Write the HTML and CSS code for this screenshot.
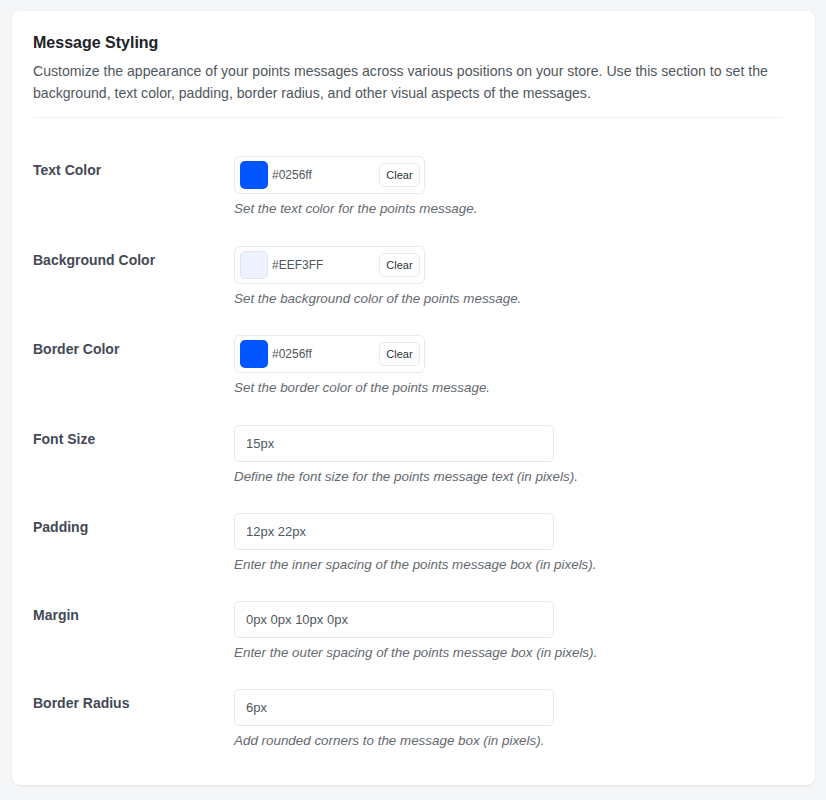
FILE: index.html
```html
<!DOCTYPE html>
<html lang="en">
<head>
    <meta charset="UTF-8">
    <meta name="viewport" content="width=device-width, initial-scale=1.0">
    <title>Message Styling</title>
    <link rel="stylesheet" href="styles.css">
</head>
<body>

    <div class="settings-card">
        <h2>Message Styling</h2>
        <p class="section-desc">Customize the appearance of your points messages across various positions on your store. Use this section to set the background, text color, padding, border radius, and other visual aspects of the messages.</p>
        <hr class="divider">

        <!-- Colores -->
        <div class="setting-row color-row">
            <label class="setting-label">Text Color</label>
            <div class="setting-field">
                <div class="color-picker">
                    <span class="swatch swatch-blue"></span>
                    <span class="hex">#0256ff</span>
                    <button type="button" class="clear-btn">Clear</button>
                </div>
                <p class="field-desc">Set the text color for the points message.</p>
            </div>
        </div>
        <div class="setting-row color-row">
            <label class="setting-label">Background Color</label>
            <div class="setting-field">
                <div class="color-picker">
                    <span class="swatch swatch-light"></span>
                    <span class="hex">#EEF3FF</span>
                    <button type="button" class="clear-btn">Clear</button>
                </div>
                <p class="field-desc">Set the background color of the points message.</p>
            </div>
        </div>
        <div class="setting-row color-row">
            <label class="setting-label">Border Color</label>
            <div class="setting-field">
                <div class="color-picker">
                    <span class="swatch swatch-blue"></span>
                    <span class="hex">#0256ff</span>
                    <button type="button" class="clear-btn">Clear</button>
                </div>
                <p class="field-desc">Set the border color of the points message.</p>
            </div>
        </div>

        <!-- Medidas -->
        <div class="setting-row">
            <label class="setting-label" for="font-size">Font Size</label>
            <div class="setting-field">
                <input type="text" id="font-size" value="15px">
                <p class="field-desc">Define the font size for the points message text (in pixels).</p>
            </div>
        </div>
        <div class="setting-row">
            <label class="setting-label" for="padding">Padding</label>
            <div class="setting-field">
                <input type="text" id="padding" value="12px 22px">
                <p class="field-desc">Enter the inner spacing of the points message box (in pixels).</p>
            </div>
        </div>
        <div class="setting-row">
            <label class="setting-label" for="margin">Margin</label>
            <div class="setting-field">
                <input type="text" id="margin" value="0px 0px 10px 0px">
                <p class="field-desc">Enter the outer spacing of the points message box (in pixels).</p>
            </div>
        </div>
        <div class="setting-row">
            <label class="setting-label" for="border-radius">Border Radius</label>
            <div class="setting-field">
                <input type="text" id="border-radius" value="6px">
                <p class="field-desc">Add rounded corners to the message box (in pixels).</p>
            </div>
        </div>
    </div>

</body>
</html>
```

FILE: styles.css
```css
body {
    font-family: "Liberation Sans", Arial, sans-serif;
    background-color: #f5f6f8;
    color: #3c434a;
    margin: 0;
    padding: 11px 11px 15px 12px;
}
.settings-card {
    background-color: #fff;
    border-radius: 8px;
    box-shadow: 0 1px 3px rgba(0, 0, 0, 0.08);
    padding: 22px 32px 22px 21px;
}
.settings-card h2 {
    font-size: 16px;
    font-weight: 700;
    line-height: 19px;
    color: #1d2327;
    margin: 0 0 8px;
}
.section-desc {
    font-size: 14.1px;
    line-height: 22px;
    color: #50575e;
    margin: 0;
}
.divider {
    border: none;
    border-top: 1px solid #eff0f2;
    margin: 13px 0 24px;
}
.setting-row {
    display: grid;
    grid-template-columns: 201px 1fr;
    padding: 14px 0 13px;
}
.color-row {
    padding-bottom: 13.6px;
}
.setting-label {
    font-size: 14px;
    font-weight: 700;
    line-height: 18px;
    color: #434955;
    padding-top: 5px;
}
.color-picker {
    display: flex;
    align-items: center;
    box-sizing: border-box;
    width: 191px;
    height: 38px;
    padding: 0 5px;
    border: 1px solid #e8eaee;
    border-radius: 6px;
}
.swatch {
    width: 28px;
    height: 28px;
    border-radius: 5px;
    box-sizing: border-box;
    margin-right: 4px;
}
.swatch-blue {
    background-color: #0256ff;
}
.swatch-light {
    background-color: #eef3ff;
    border: 1px solid #dfe5f2;
}
.hex {
    font-size: 12px;
    color: #50575e;
    flex: 1;
}
.clear-btn {
    font-family: inherit;
    font-size: 11px;
    color: #2c3338;
    background-color: #fff;
    border: 1px solid #e8eaee;
    border-radius: 5px;
    width: 41px;
    height: 24px;
    padding: 0;
    margin-right: -1px;
}
.setting-field input[type="text"] {
    box-sizing: border-box;
    width: 320px;
    height: 37px;
    padding: 0 11px;
    border: 1px solid #e5e7eb;
    border-radius: 5px;
    font-family: inherit;
    font-size: 13px;
    color: #50575e;
    display: block;
}
.field-desc {
    font-size: 13.4px;
    font-style: italic;
    line-height: 18px;
    color: #646970;
    margin: 6px 0 0;
}
```
